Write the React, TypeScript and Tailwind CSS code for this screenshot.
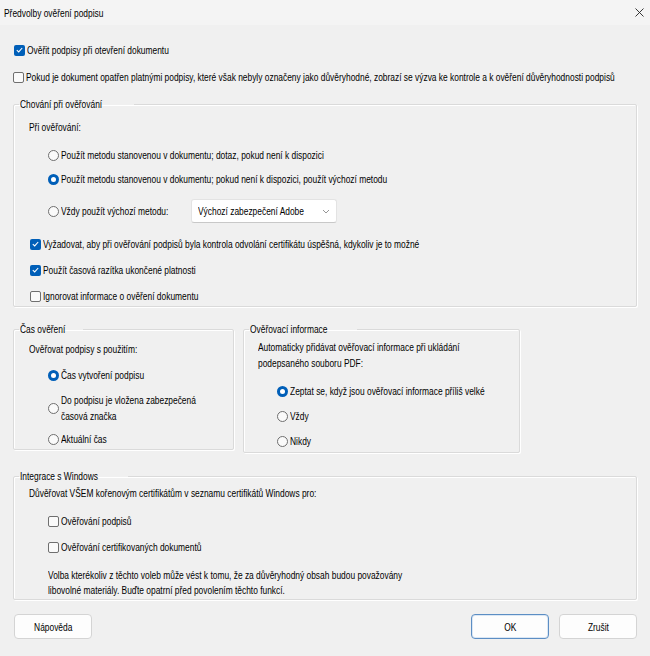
import React from "react";

const font = {
  fontFamily: '"Liberation Sans", Arial, sans-serif',
};

// the dialog's UI font is a narrow one; squeeze the text horizontally
function T({ children, center }: { children: React.ReactNode; center?: boolean }) {
  return (
    <span className={"inline-block whitespace-nowrap scale-x-[0.73] " + (center ? "origin-center" : "origin-left")}>
      {children}
    </span>
  );
}

function Check({ checked, label }: { checked?: boolean; label: string }) {
  return (
    <div className="flex items-center h-[14px] gap-[2px]">
      {checked ? (
        <span className="w-[11px] h-[11px] rounded-[2px] bg-[#005fb8] flex items-center justify-center shrink-0">
          <svg width="7" height="6" viewBox="0 0 7 6">
            <path d="M0.8 3.1 L2.7 4.9 L6.2 1" fill="none" stroke="#fff" strokeWidth="1.1" />
          </svg>
        </span>
      ) : (
        <span className="w-[11px] h-[11px] rounded-[2px] border border-[#6f6f6f] bg-[#fafafa] shrink-0" />
      )}
      <T>{label}</T>
    </div>
  );
}

function Radio({ checked, lines }: { checked?: boolean; lines: string[] }) {
  return (
    <div className="flex items-center gap-[2px]">
      {checked ? (
        <span className="w-[11px] h-[11px] rounded-full bg-[#005fb8] flex items-center justify-center shrink-0">
          <span className="w-[5px] h-[5px] rounded-full bg-white" />
        </span>
      ) : (
        <span className="w-[11px] h-[11px] rounded-full border border-[#6f6f6f] bg-[#fafafa] shrink-0" />
      )}
      <div className="flex flex-col leading-[16px]">
        {lines.map((l) => (
          <T key={l}>{l}</T>
        ))}
      </div>
    </div>
  );
}

function Group({ title, className, children }: { title: string; className?: string; children: React.ReactNode }) {
  return (
    <fieldset className={"min-w-0 border border-[#dadada] rounded-[2px] shadow-[1px_1px_0_#fff,inset_1px_1px_0_#fff] " + (className || "")}>
      <legend className="ml-[5px] px-[1px] leading-[14px]">
        <T>{title}</T>
      </legend>
      {children}
    </fieldset>
  );
}

function Button({ label, primary }: { label: string; primary?: boolean }) {
  return (
    <button
      className={
        "w-[78px] h-[25px] bg-[#fdfdfd] rounded-[4px] border flex items-center justify-center " +
        (primary ? "border-[#5c8ec4] shadow-[inset_0_0_0_1px_#dbe7f4]" : "border-[#d4d4d4]")
      }
    >
      <T center>{label}</T>
    </button>
  );
}

export default function App() {
  return (
    <div className="w-[650px] h-[656px] bg-[#f0f0f0] text-[11.5px] text-black leading-[14px] overflow-hidden" style={font}>
      <div className="h-[25px] bg-[#f4f4f4] flex items-center justify-between pl-[4px] pr-[6px]">
        <T>Předvolby ověření podpisu</T>
        <svg width="9" height="9" viewBox="0 0 9 9">
          <path d="M0.5 0.5 L8.5 8.5 M8.5 0.5 L0.5 8.5" stroke="#222" strokeWidth="0.9" />
        </svg>
      </div>

      <div className="px-[13px]">
        <div className="mt-[18px] pl-[1px]">
          <Check checked label="Ověřit podpisy při otevření dokumentu" />
        </div>
        <div className="mt-[13px]">
          <Check label="Pokud je dokument opatřen platnými podpisy, které však nebyly označeny jako důvěryhodné, zobrazí se výzva ke kontrole a k ověření důvěryhodnosti podpisů" />
        </div>

        <Group title="Chování při ověřování" className="mt-[13px]">
          <div className="pl-[15px] pb-[3px]">
            <div className="mt-[9px]">
              <T>Při ověřování:</T>
            </div>
            <div className="ml-[19px] mt-[14px] h-[14px] flex items-center">
              <Radio lines={["Použít metodu stanovenou v dokumentu; dotaz, pokud není k dispozici"]} />
            </div>
            <div className="ml-[19px] mt-[10px] h-[14px] flex items-center">
              <Radio checked lines={["Použít metodu stanovenou v dokumentu; pokud není k dispozici, použít výchozí metodu"]} />
            </div>
            <div className="ml-[19px] mt-[13px] h-[24px] flex items-center">
              <div className="w-[143px] min-w-0">
                <Radio lines={["Vždy použít výchozí metodu:"]} />
              </div>
              <div className="w-[146px] h-[24px] shrink-0 bg-white border border-[#e3e3e3] border-b-[#c8c8c8] rounded-[3px] flex items-center pl-[6px] pr-[6px]">
                <div className="flex-1 min-w-0">
                  <T>Výchozí zabezpečení Adobe</T>
                </div>
                <svg className="shrink-0" width="8" height="5" viewBox="0 0 8 5">
                  <path d="M1 1 L4 4 L7 1" fill="none" stroke="#8a8a8a" strokeWidth="0.9" />
                </svg>
              </div>
            </div>
            <div className="ml-[1px] mt-[14px]">
              <Check checked label="Vyžadovat, aby při ověřování podpisů byla kontrola odvolání certifikátu úspěšná, kdykoliv je to možné" />
            </div>
            <div className="ml-[1px] mt-[12px]">
              <Check checked label="Použít časová razítka ukončené platnosti" />
            </div>
            <div className="ml-[1px] mt-[12px]">
              <Check label="Ignorovat informace o ověření dokumentu" />
            </div>
          </div>
        </Group>

        <div className="flex items-start gap-[9px] mt-[15px]">
          <Group title="Čas ověření" className="w-[221px] shrink-0">
            <div className="pl-[15px] pb-[3px]">
              <div className="mt-[6px]">
                <T>Ověřovat podpisy s použitím:</T>
              </div>
              <div className="ml-[19px] mt-[12px] h-[14px] flex items-center">
                <Radio checked lines={["Čas vytvoření podpisu"]} />
              </div>
              <div className="ml-[19px] mt-[10px]">
                <Radio lines={["Do podpisu je vložena zabezpečená", "časová značka"]} />
              </div>
              <div className="ml-[19px] mt-[8px] h-[14px] flex items-center">
                <Radio lines={["Aktuální čas"]} />
              </div>
            </div>
          </Group>

          <Group title="Ověřovací informace" className="w-[277px] shrink-0">
            <div className="pl-[14px] pb-[4px]">
              <div className="mt-[3px] flex flex-col leading-[16px]">
                <T>Automaticky přidávat ověřovací informace při ukládání</T>
                <T>podepsaného souboru PDF:</T>
              </div>
              <div className="ml-[19px] mt-[13px] h-[14px] flex items-center">
                <Radio checked lines={["Zeptat se, když jsou ověřovací informace příliš velké"]} />
              </div>
              <div className="ml-[19px] mt-[11px] h-[14px] flex items-center">
                <Radio lines={["Vždy"]} />
              </div>
              <div className="ml-[19px] mt-[11px] h-[14px] flex items-center">
                <Radio lines={["Nikdy"]} />
              </div>
            </div>
          </Group>
        </div>

        <Group title="Integrace s Windows" className="mt-[16px]">
          <div className="pl-[15px] pb-[1px]">
            <div className="mt-[3px]">
              <T>Důvěřovat VŠEM kořenovým certifikátům v seznamu certifikátů Windows pro:</T>
            </div>
            <div className="ml-[19px] mt-[14px]">
              <Check label="Ověřování podpisů" />
            </div>
            <div className="ml-[19px] mt-[12px]">
              <Check label="Ověřování certifikovaných dokumentů" />
            </div>
            <div className="ml-[19px] mt-[14px] flex flex-col leading-[15px]">
              <T>Volba kterékoliv z těchto voleb může vést k tomu, že za důvěryhodný obsah budou považovány</T>
              <T>libovolné materiály. Buďte opatrní před povolením těchto funkcí.</T>
            </div>
          </div>
        </Group>

        <div className="mt-[14px] flex items-center">
          <div className="ml-[1px]">
            <Button label="Nápověda" />
          </div>
          <div className="ml-auto flex gap-[10px]">
            <Button label="OK" primary />
            <Button label="Zrušit" />
          </div>
        </div>
      </div>
    </div>
  );
}
